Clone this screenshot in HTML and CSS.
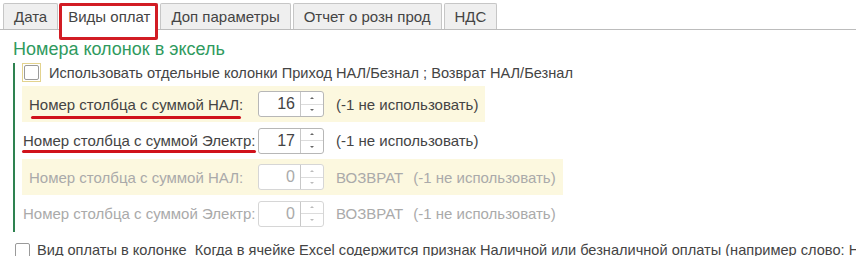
FILE: index.html
```html
<!DOCTYPE html>
<html lang="ru">
<head>
  <meta charset="UTF-8">
  <title>Виды оплат</title>
  <link rel="stylesheet" href="styles.css">
</head>
<body>
  <div class="tabs">
    <div class="tab">Дата</div>
    <div class="tab active">Виды оплат</div>
    <div class="tab">Доп параметры</div>
    <div class="tab">Отчет о розн прод</div>
    <div class="tab">НДС</div>
  </div>

  <div class="page">
    <div class="group-title">Номера колонок в эксель</div>

    <div class="group">
      <label class="check-row">
        <span class="check focused"><span class="box"></span></span>
        <span class="text">Использовать отдельные колонки Приход НАЛ/Безнал ; Возврат НАЛ/Безнал</span>
      </label>

      <div class="row hl">
        <span class="label marked">Номер столбца с суммой НАЛ:</span>
        <div class="num"><span class="val">16</span><span class="spin"><i class="up"></i><i class="down"></i></span></div>
        <span class="hint">(-1 не использовать)</span>
      </div>

      <div class="row">
        <span class="label marked">Номер столбца с суммой Электр:</span>
        <div class="num"><span class="val">17</span><span class="spin"><i class="up"></i><i class="down"></i></span></div>
        <span class="hint">(-1 не использовать)</span>
      </div>

      <div class="row hl disabled">
        <span class="label">Номер столбца с суммой НАЛ:</span>
        <div class="num"><span class="val">0</span><span class="spin"><i class="up"></i><i class="down"></i></span></div>
        <span class="hint"><span class="ret">ВОЗВРАТ</span>(-1 не использовать)</span>
      </div>

      <div class="row disabled">
        <span class="label">Номер столбца с суммой Электр:</span>
        <div class="num"><span class="val">0</span><span class="spin"><i class="up"></i><i class="down"></i></span></div>
        <span class="hint"><span class="ret">ВОЗВРАТ</span>(-1 не использовать)</span>
      </div>
    </div>

    <label class="check-row bottom">
      <span class="box"></span>
      <span class="text">Вид оплаты в колонке&nbsp; Когда в ячейке Excel содержится признак Наличной или безналичной оплаты (например слово: Наличные)</span>
    </label>
  </div>
</body>
</html>
```

FILE: styles.css
```css
body {
  margin: 0;
  font-family: "Liberation Sans", Arial, sans-serif;
  font-size: 15px;
  color: #444;
  background: #fff;
  overflow: hidden;
  white-space: nowrap;
}

/* tabs */
.tabs {
  display: flex;
  gap: 2px;
  padding: 3px 0 0 3px;
  border-bottom: 1px solid #bcbcbc;
  height: 26px;
}

.tab {
  height: 25px;
  line-height: 25px;
  padding: 0 10px;
  border: 1px solid #c6c6c6;
  border-bottom: none;
  border-radius: 2px 2px 0 0;
  background: #efefef;
  color: #444;
}

.tab.active {
  position: relative;
  height: 26px;
  background: #fff;
  padding: 0 7px 0 7px;
}

/* annotation box round the selected tab */
.tab.active::after {
  content: "";
  position: absolute;
  left: -2px;
  top: -1px;
  right: -1px;
  height: 31px;
  border: 3px solid #d21c24;
  border-radius: 2px;
}

.page {
  padding: 8px 0 0 13px;
  overflow: hidden;
}

.group-title {
  font-size: 18px;
  color: #2f9a5e;
  line-height: 22px;
}

.group {
  margin-top: 3px;
  border-left: 2px solid #2e8250;
  padding: 0 0 0 7px;
  width: 640px;
}

.check-row {
  display: flex;
  align-items: center;
  gap: 8px;
  height: 19px;
  margin-bottom: 4px;
  font-size: 14.6px;
}

.check-row .text {
  overflow: hidden;
  min-width: 0;
}

.check {
  display: inline-flex;
  flex-shrink: 0;
  border: 1px solid #e3d38e;
  padding: 1px;
}

.box {
  display: inline-block;
  flex-shrink: 0;
  width: 13px;
  height: 13px;
  border: 1px solid #9a9a9a;
  border-radius: 2px;
  background: #fff;
}

.row {
  display: flex;
  align-items: center;
  height: 37px;
  padding: 0 7px 0 1px;
  width: fit-content;
}

.row.hl {
  background: #fcf8df;
  padding-left: 7px;
  height: 36px;
}

.label {
  width: 235px;
  position: relative;
}

.row.hl .label {
  width: 229px;
}

/* hand-drawn red underline */
.label.marked::after {
  content: "";
  position: absolute;
  left: 2px;
  width: 210px;
  bottom: -6px;
  height: 3px;
  background: #d0121b;
  border-radius: 2px;
}

.row:not(.hl) .label.marked::after {
  left: -1px;
  width: 234px;
  bottom: -4px;
}

.num {
  display: flex;
  width: 64px;
  height: 24px;
  border: 1px solid #b7b7b7;
  border-radius: 3px;
  background: #fff;
}

.val {
  flex: 1;
  text-align: right;
  padding-right: 5px;
  line-height: 24px;
  font-size: 16px;
}

.spin {
  display: flex;
  flex-direction: column;
  width: 22px;
  border-left: 1px solid #c8c8c8;
}

.spin i {
  flex: 1;
  display: flex;
  align-items: center;
  justify-content: center;
}

.spin i::before {
  content: "";
  border-left: 2px solid transparent;
  border-right: 2px solid transparent;
}

.spin .up::before {
  border-bottom: 2px solid #666;
}

.spin .down::before {
  border-top: 2px solid #666;
}

.spin i + i {
  border-top: 1px solid #dcdcdc;
}

.hint {
  margin-left: 12px;
}

.ret {
  margin-right: 10px;
}

.disabled {
  color: #aaa;
}

.disabled .num {
  border-color: #d6d6d6;
}

.disabled .val {
  color: #aaa;
}

.disabled .spin .up::before {
  border-bottom-color: #bbb;
}

.disabled .spin .down::before {
  border-top-color: #bbb;
}

.check-row.bottom {
  margin-top: 9px;
  margin-left: 2px;
  gap: 7px;
  height: 18px;
}
```
